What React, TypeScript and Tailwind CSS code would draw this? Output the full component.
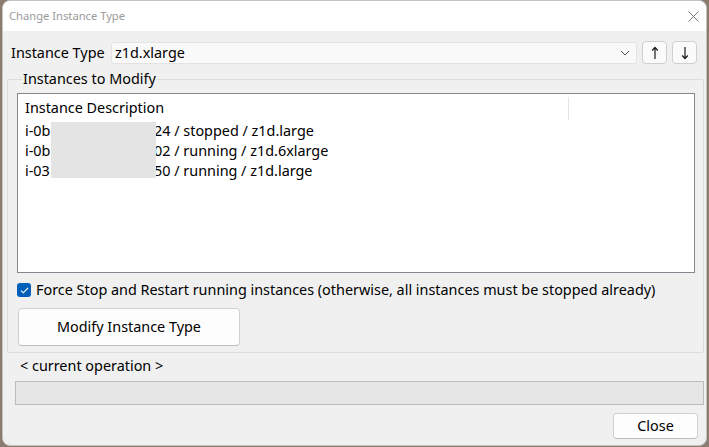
const font = { fontFamily: '"Noto Sans", "Open Sans", sans-serif' };

const ArrowUp = () => (
  <svg width="8" height="14" viewBox="0 0 8 14">
    <path d="M4 1.5V13M1.2 4.5L4 1.5L6.8 4.5" stroke="#1a1a1a" strokeWidth="1.2" fill="none" />
  </svg>
);

const ArrowDown = () => (
  <svg width="8" height="14" viewBox="0 0 8 14">
    <path d="M4 1V12.5M1.2 9.5L4 12.5L6.8 9.5" stroke="#1a1a1a" strokeWidth="1.2" fill="none" />
  </svg>
);

const rows = [
  { pre: "i-0b", post: "24 / stopped / z1d.large" },
  { pre: "i-0b", post: "02 / running / z1d.6xlarge" },
  { pre: "i-03", post: "50 / running / z1d.large" },
];

export default function App() {
  return (
    <div className="w-[709px] h-[447px] bg-[#8a7d70] pl-[2px]" style={font}>
      <div className="w-[705px] h-[446px] flex flex-col rounded-[8px] border border-[#c4c4c4] overflow-hidden bg-[#f0f0f0] text-[14.4px] text-black">
        {/* title bar */}
        <div className="h-[30px] shrink-0 bg-white flex items-center justify-between pl-[6px] pr-[7px]">
          <span className="text-[11.2px] text-[#9a9a9a]">Change Instance Type</span>
          <svg width="11" height="11" viewBox="0 0 11 11">
            <path d="M0.5 0.5L10.5 10.5M10.5 0.5L0.5 10.5" stroke="#7a7a7a" strokeWidth="1" />
          </svg>
        </div>

        {/* instance type row */}
        <div className="mt-[10px] flex items-center h-[23px] shrink-0">
          <span className="w-[108px] pl-[8px] shrink-0">Instance Type</span>
          <div className="w-[526px] h-[22px] shrink-0 flex items-center justify-between bg-[#f9f9f9] border border-[#e3e3e3] rounded-[3px] pl-[3px] pr-[6px]">
            <span>z1d.xlarge</span>
            <svg width="10" height="6" viewBox="0 0 10 6">
              <path d="M1 1L5 5L9 1" stroke="#555" strokeWidth="1" fill="none" />
            </svg>
          </div>
          <button className="ml-[5px] w-[25px] h-[23px] shrink-0 flex items-center justify-center bg-[#fbfbfb] border border-[#d0d0d0] rounded-[4px]">
            <ArrowUp />
          </button>
          <button className="ml-[5px] w-[25px] h-[23px] shrink-0 flex items-center justify-center bg-[#fbfbfb] border border-[#d0d0d0] rounded-[4px]">
            <ArrowDown />
          </button>
        </div>

        {/* group box */}
        <fieldset className="mt-[5px] ml-[4px] w-[697px] shrink-0 border border-[#dcdcdc] rounded-[2px] pl-[9px] pb-[6px]">
          <legend className="ml-[5px] px-[1px] leading-[20px]">Instances to Modify</legend>
          <div className="mt-[4px] w-[678px] h-[180px] border border-[#828790] bg-white relative">
            <div className="h-[27px] pt-px flex items-center">
              <span className="w-[550px] pl-[7px]">Instance Description</span>
              <div className="w-px h-[23px] bg-[#e5e5e5]" />
            </div>
            {rows.map((r, i) => (
              <div key={i} className="h-[20px] flex items-center pl-[7px]">
                <span className="w-[129px] shrink-0">{r.pre}</span>
                <span>{r.post}</span>
              </div>
            ))}
            <div className="absolute left-[33px] top-[28px] w-[105px] h-[56px] bg-[#e4e4e4]" />
          </div>

          <div className="mt-[10px] h-[14px] flex items-center">
            <div className="w-[14px] h-[14px] rounded-[3px] bg-[#005fb8] flex items-center justify-center">
              <svg width="9" height="7" viewBox="0 0 9 7">
                <path d="M1 3.6L3.3 5.8L8 1" stroke="white" strokeWidth="1.1" fill="none" />
              </svg>
            </div>
            <span className="ml-[5px] whitespace-nowrap">
              Force Stop and Restart running instances (otherwise, all instances must be stopped already)
            </span>
          </div>

          <button className="mt-[11px] ml-px w-[222px] h-[38px] bg-[#fdfdfd] border border-[#d0d0d0] border-b-[#bdbdbd] rounded-[4px]">
            Modify Instance Type
          </button>
        </fieldset>

        <div className="mt-[5px] pl-[17px] h-[16px] flex items-center shrink-0">&lt; current operation &gt;</div>

        <div className="mt-[7px] ml-[12px] w-[689px] h-[24px] shrink-0 bg-[#e6e6e6] border border-[#bcbcbc]" />

        <div className="mt-[8px] flex justify-end pr-[8px] shrink-0">
          <button className="w-[85px] h-[26px] bg-[#fdfdfd] border border-[#d0d0d0] border-b-[#bdbdbd] rounded-[4px]">
            Close
          </button>
        </div>
      </div>
    </div>
  );
}
